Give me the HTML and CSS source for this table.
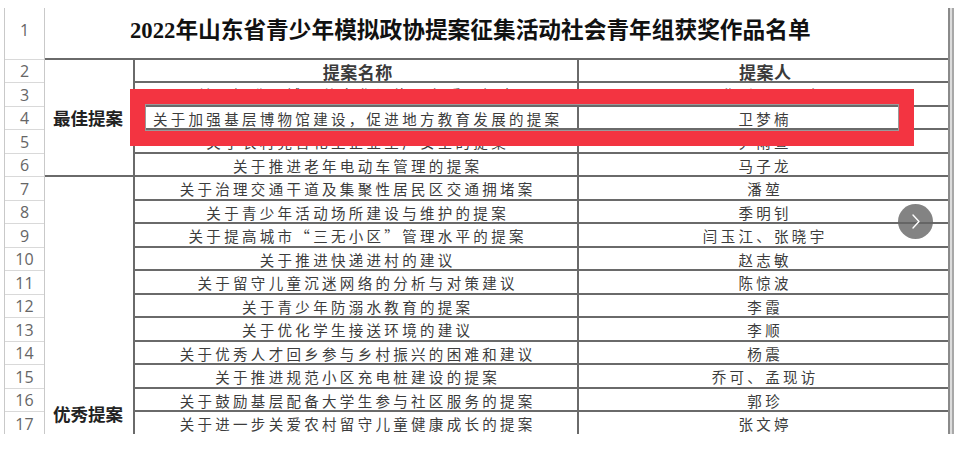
FILE: index.html
```html
<!DOCTYPE html>
<html lang="zh-CN">
<head>
<meta charset="utf-8">
<title>获奖作品名单</title>
<link rel="stylesheet" href="styles.css">
</head>
<body>
<div class="page">
  <div class="sheet">
    <div class="rownums">
      <div class="rn rn-title">1</div>
      <div class="rn">2</div>
      <div class="rn">3</div>
      <div class="rn">4</div>
      <div class="rn">5</div>
      <div class="rn">6</div>
      <div class="rn">7</div>
      <div class="rn">8</div>
      <div class="rn">9</div>
      <div class="rn">10</div>
      <div class="rn">11</div>
      <div class="rn">12</div>
      <div class="rn">13</div>
      <div class="rn">14</div>
      <div class="rn">15</div>
      <div class="rn">16</div>
      <div class="rn">17</div>
    </div>
    <div class="main">
      <div class="title">2022年山东省青少年模拟政协提案征集活动社会青年组获奖作品名单</div>
      <div class="body">
        <div class="cats">
          <div class="cat cat-best">最佳提案</div>
          <div class="cat cat-good">优秀提案</div>
        </div>
        <div class="rows">
          <div class="row head"><div class="name">提案名称</div><div class="who">提案人</div></div>
          <div class="row"><div class="name">关于提升县城公共文化设施服务质量提案</div><div class="who">吴欣彤、孟子轩</div></div>
          <div class="row"><div class="name">关于加强基层博物馆建设，促进地方教育发展的提案</div><div class="who">卫梦楠</div></div>
          <div class="row"><div class="name">关于农村完善化工企业生产安全的提案</div><div class="who">尹雨萱</div></div>
          <div class="row"><div class="name">关于推进老年电动车管理的提案</div><div class="who">马子龙</div></div>
          <div class="row"><div class="name">关于治理交通干道及集聚性居民区交通拥堵案</div><div class="who">潘堃</div></div>
          <div class="row"><div class="name">关于青少年活动场所建设与维护的提案</div><div class="who">季明钊</div></div>
          <div class="row"><div class="name">关于提高城市“三无小区”管理水平的提案</div><div class="who">闫玉江、张晓宇</div></div>
          <div class="row"><div class="name">关于推进快递进村的建议</div><div class="who">赵志敏</div></div>
          <div class="row"><div class="name">关于留守儿童沉迷网络的分析与对策建议</div><div class="who">陈惊波</div></div>
          <div class="row"><div class="name">关于青少年防溺水教育的提案</div><div class="who">李霞</div></div>
          <div class="row"><div class="name">关于优化学生接送环境的建议</div><div class="who">李顺</div></div>
          <div class="row"><div class="name">关于优秀人才回乡参与乡村振兴的困难和建议</div><div class="who">杨震</div></div>
          <div class="row"><div class="name">关于推进规范小区充电桩建设的提案</div><div class="who">乔可、孟现访</div></div>
          <div class="row"><div class="name">关于鼓励基层配备大学生参与社区服务的提案</div><div class="who">郭珍</div></div>
          <div class="row"><div class="name">关于进一步关爱农村留守儿童健康成长的提案</div><div class="who">张文婷</div></div>
        </div>
      </div>
    </div>
    <div class="edge"></div>
  </div>
  <div class="highlight"></div>
  <div class="next">
    <svg width="35" height="35" viewBox="0 0 35 35"><path d="M15 11 L21 17.5 L15 24" fill="none" stroke="#fff" stroke-width="1.4" stroke-linecap="round" stroke-linejoin="round"/></svg>
  </div>
</div>
</body>
</html>
```
FILE: styles.css
```css
html, body {
  margin: 0;
  padding: 0;
  background: #fff;
}

.page {
  position: relative;
  width: 957px;
  height: 458px;
  padding: 8px 0 0 4px;
  box-sizing: border-box;
  font-family: "Noto Sans CJK SC", sans-serif;
  overflow: hidden;
}

.sheet {
  display: flex;
  height: 426px;
  overflow: hidden;
}

.rownums {
  width: 41px;
  flex: none;
  display: flex;
  flex-direction: column;
  border-left: 1px solid #c9c9c9;
  border-right: 1px solid #c9c9c9;
  box-sizing: border-box;
}

.rn {
  height: 23.5px;
  flex: none;
  box-sizing: border-box;
  border-bottom: 1px solid #d9d9d9;
  display: flex;
  align-items: center;
  justify-content: center;
  font-family: "Open Sans", sans-serif;
  font-size: 16px;
  color: #666;
  padding-top: 1px;
}

.rn-title {
  height: 51.5px;
  padding-bottom: 8px;
}

.main {
  width: 903px;
  flex: none;
  display: flex;
  flex-direction: column;
}

.title {
  height: 51.5px;
  flex: none;
  box-sizing: border-box;
  border-bottom: 2px solid #6a6a6a;
  display: flex;
  align-items: center;
  padding: 0 0 9px 85px;
  font-family: "Liberation Serif", "Noto Sans CJK SC", serif;
  font-weight: 700;
  font-size: 22.7px;
  color: #111;
  white-space: nowrap;
}

.body {
  display: flex;
}

.cats {
  width: 90px;
  flex: none;
  display: flex;
  flex-direction: column;
  border-right: 2px solid #6a6a6a;
  box-sizing: border-box;
}

.cat {
  display: flex;
  justify-content: center;
  font-weight: 700;
  font-size: 17.5px;
  color: #222;
  box-sizing: border-box;
  padding-right: 2px;
}

.cat-best {
  height: 117.5px;
  align-items: center;
  border-bottom: 2px solid #6a6a6a;
}

.cat-good {
  height: 258.5px;
  align-items: flex-end;
  padding-bottom: 10px;
}

.rows {
  width: 813px;
  flex: none;
  display: flex;
  flex-direction: column;
}

.row {
  height: 23.5px;
  flex: none;
  display: flex;
  box-sizing: border-box;
  border-bottom: 2px solid #6a6a6a;
  font-size: 14.5px;
  letter-spacing: 3.3px;
  color: #3c3c3c;
  white-space: nowrap;
}

.name, .who {
  display: flex;
  align-items: center;
  justify-content: center;
  padding-left: 3.3px;
  padding-top: 2px;
  box-sizing: border-box;
}

.name {
  width: 444px;
  border-right: 2px solid #6a6a6a;
}

.who {
  width: 369px;
}

.head {
  font-size: 17px;
  letter-spacing: 0.5px;
  font-weight: 700;
  color: #3a3a3a;
}

.edge {
  width: 6px;
  flex: none;
  box-sizing: border-box;
  border-left: 2px solid #8a8a8a;
  border-right: 2px solid #a8a8a8;
  background: #dcdcdc;
}

.highlight {
  position: absolute;
  left: 130px;
  top: 89px;
  width: 784px;
  height: 57px;
  box-sizing: border-box;
  border: 15px solid #f33441;
  box-shadow: inset 0 0 0 1px #9a9a9a;
}

.next {
  position: absolute;
  left: 898px;
  top: 204px;
  width: 35px;
  height: 35px;
  border-radius: 50%;
  background: rgba(100, 100, 100, 0.8);
}

.next svg {
  display: block;
}
```
